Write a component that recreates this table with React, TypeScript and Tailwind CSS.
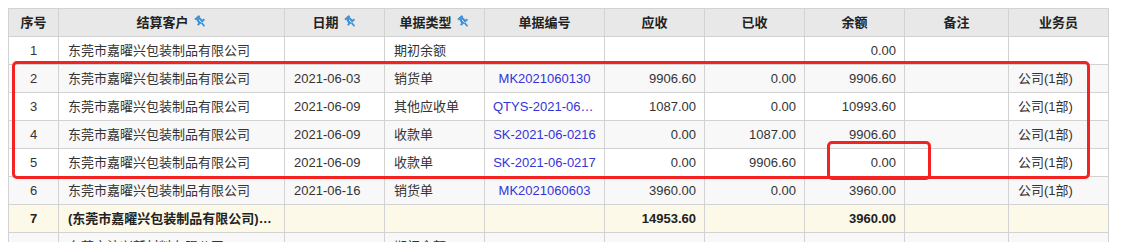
import React from 'react';

type Row = {
    no: string;
    customer: string;
    date?: string;
    type?: string;
    billNo?: string;
    receivable?: string;
    received?: string;
    balance?: string;
    remark?: string;
    staff?: string;
    total?: boolean;
};

const rows: Row[] = [
    { no: '1', customer: '东莞市嘉曜兴包装制品有限公司', type: '期初余额', balance: '0.00' },
    { no: '2', customer: '东莞市嘉曜兴包装制品有限公司', date: '2021-06-03', type: '销货单', billNo: 'MK2021060130', receivable: '9906.60', received: '0.00', balance: '9906.60', staff: '公司(1部)' },
    { no: '3', customer: '东莞市嘉曜兴包装制品有限公司', date: '2021-06-09', type: '其他应收单', billNo: 'QTYS-2021-06-0001', receivable: '1087.00', received: '0.00', balance: '10993.60', staff: '公司(1部)' },
    { no: '4', customer: '东莞市嘉曜兴包装制品有限公司', date: '2021-06-09', type: '收款单', billNo: 'SK-2021-06-0216', receivable: '0.00', received: '1087.00', balance: '9906.60', staff: '公司(1部)' },
    { no: '5', customer: '东莞市嘉曜兴包装制品有限公司', date: '2021-06-09', type: '收款单', billNo: 'SK-2021-06-0217', receivable: '0.00', received: '9906.60', balance: '0.00', staff: '公司(1部)' },
    { no: '6', customer: '东莞市嘉曜兴包装制品有限公司', date: '2021-06-16', type: '销货单', billNo: 'MK2021060603', receivable: '3960.00', received: '0.00', balance: '3960.00', staff: '公司(1部)' },
    { no: '7', customer: '(东莞市嘉曜兴包装制品有限公司)小计', receivable: '14953.60', balance: '3960.00', total: true },
    { no: '8', customer: '东莞市沐兴新材料有限公司', type: '期初余额', balance: '27140.00' },
];

// little blue push-pin used as the sort marker
const PinIcon = () => (
    <svg width="13" height="13" viewBox="0 0 12 12" className="inline-block ml-[5px] -mt-[3px] align-middle">
        <g transform="rotate(-40 6 6)" fill="#3d8fd6">
            <rect x="3.2" y="0.5" width="5.6" height="1.9" rx="0.5" />
            <path d="M4.1 2.3h3.8l0.6 3.6h1.6v1.7H1.9V5.9h1.6z" />
            <rect x="5.2" y="7.5" width="1.6" height="4.2" />
        </g>
        <path d="M4.6 4.4l2.4 2.4" stroke="#fff" strokeWidth="0.9" transform="rotate(0)" />
    </svg>
);

const headers: { label: string; sort?: boolean }[] = [
    { label: '序号' },
    { label: '结算客户', sort: true },
    { label: '日期', sort: true },
    { label: '单据类型', sort: true },
    { label: '单据编号' },
    { label: '应收' },
    { label: '已收' },
    { label: '余额' },
    { label: '备注' },
    { label: '业务员' },
];

const widths = [50, 226, 100, 100, 120, 100, 100, 100, 104, 100];

const App: React.FC = () => {
    return (
        <div className="relative w-[1138px] h-[242px] overflow-hidden bg-white pl-[8px] pt-[8px] text-[13px] text-[#333]" style={{ fontFamily: '"Liberation Sans", "Noto Sans CJK SC", sans-serif' }}>
            <table className="table-fixed border-collapse w-[1100px]">
                <colgroup>
                    {widths.map((w, i) => <col key={i} style={{ width: w }} />)}
                </colgroup>
                <thead>
                    <tr className="h-[28px] bg-[#e8e8e8]">
                        {headers.map(h => (
                            <th key={h.label} className="border border-[#d2d2d2] font-bold text-center text-[#222] p-0">
                                {h.label}
                                {h.sort && <PinIcon />}
                            </th>
                        ))}
                    </tr>
                </thead>
                <tbody>
                    {rows.map((r, i) => (
                        <tr key={r.no} className={`h-[28px] ${r.total ? 'bg-[#fdf9e9] font-bold text-[#222]' : i % 2 === 1 ? 'bg-[#f8f8f8]' : 'bg-white'}`}>
                            <td className="border border-[#d2d2d2] text-center p-0">{r.no}</td>
                            <td className="border border-[#d2d2d2] px-[9px] truncate">{r.customer}</td>
                            <td className="border border-[#d2d2d2] px-[9px]">{r.date}</td>
                            <td className="border border-[#d2d2d2] px-[9px]">{r.type}</td>
                            <td className="border border-[#d2d2d2] px-[8px] text-center truncate text-[#3434d8]">{r.billNo}</td>
                            <td className="border border-[#d2d2d2] px-[8px] text-right">{r.receivable}</td>
                            <td className="border border-[#d2d2d2] px-[8px] text-right">{r.received}</td>
                            <td className="border border-[#d2d2d2] px-[8px] text-right">{r.balance}</td>
                            <td className="border border-[#d2d2d2] px-[8px]">{r.remark}</td>
                            <td className="border border-[#d2d2d2] px-[9px]">{r.staff}</td>
                        </tr>
                    ))}
                </tbody>
            </table>
            {/* annotation marks */}
            <div className="absolute left-[12px] top-[61px] w-[1078px] h-[118px] border-[3px] border-[#f52222] rounded-[5px]" />
            <div className="absolute left-[827px] top-[141px] w-[104px] h-[39px] border-[3px] border-[#f52222] rounded-[5px]" />
        </div>
    );
};

export default App;
